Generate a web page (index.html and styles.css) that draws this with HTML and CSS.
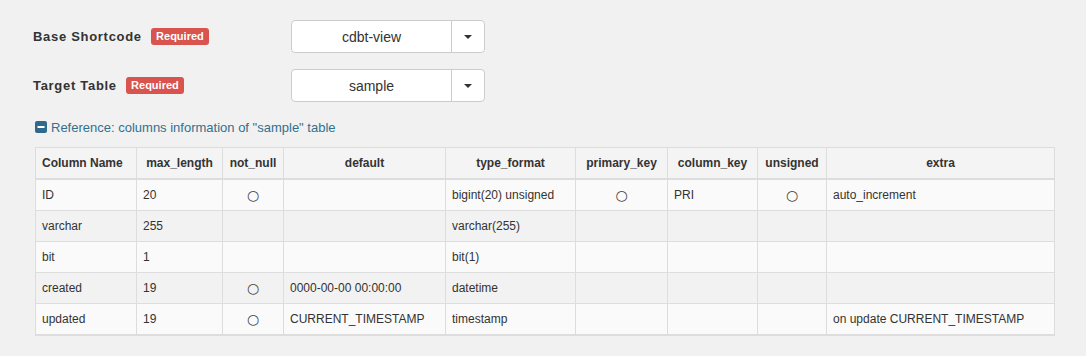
FILE: index.html
```html
<!DOCTYPE html>
<html lang="en">
<head>
    <meta charset="UTF-8">
    <title>cdbt shortcode</title>
    <link rel="stylesheet" href="styles.css">
</head>
<body>
    <div class="panel">
        <div class="field">
            <label class="field-label">Base Shortcode <span class="badge">Required</span></label>
            <div class="select">
                <span class="select-value">cdbt-view</span>
                <span class="select-caret"><i class="caret"></i></span>
            </div>
        </div>
        <div class="field">
            <label class="field-label">Target Table <span class="badge">Required</span></label>
            <div class="select">
                <span class="select-value">sample</span>
                <span class="select-caret"><i class="caret"></i></span>
            </div>
        </div>

        <div class="reference-toggle">
            <svg class="toggle-icon" width="12" height="12" viewBox="0 0 12 12">
                <rect x="0" y="0" width="12" height="12" rx="2" fill="#2f6a8c"/>
                <rect x="2.5" y="5" width="7" height="2" fill="#fff"/>
            </svg>
            Reference: columns information of "sample" table
        </div>

        <table class="columns">
            <colgroup>
                <col style="width:101px">
                <col style="width:86px">
                <col style="width:61px">
                <col style="width:162px">
                <col style="width:130px">
                <col style="width:92px">
                <col style="width:90px">
                <col style="width:69px">
                <col style="width:228px">
            </colgroup>
            <thead>
                <tr>
                    <th class="first">Column Name</th>
                    <th>max_length</th>
                    <th>not_null</th>
                    <th>default</th>
                    <th>type_format</th>
                    <th>primary_key</th>
                    <th>column_key</th>
                    <th>unsigned</th>
                    <th>extra</th>
                </tr>
            </thead>
            <tbody>
                <tr>
                    <td>ID</td>
                    <td>20</td>
                    <td class="mark">○</td>
                    <td></td>
                    <td>bigint(20) unsigned</td>
                    <td class="mark">○</td>
                    <td>PRI</td>
                    <td class="mark">○</td>
                    <td>auto_increment</td>
                </tr>
                <tr>
                    <td>varchar</td>
                    <td>255</td>
                    <td></td>
                    <td></td>
                    <td>varchar(255)</td>
                    <td></td>
                    <td></td>
                    <td></td>
                    <td></td>
                </tr>
                <tr>
                    <td>bit</td>
                    <td>1</td>
                    <td></td>
                    <td></td>
                    <td>bit(1)</td>
                    <td></td>
                    <td></td>
                    <td></td>
                    <td></td>
                </tr>
                <tr>
                    <td>created</td>
                    <td>19</td>
                    <td class="mark">○</td>
                    <td>0000-00-00 00:00:00</td>
                    <td>datetime</td>
                    <td></td>
                    <td></td>
                    <td></td>
                    <td></td>
                </tr>
                <tr>
                    <td>updated</td>
                    <td>19</td>
                    <td class="mark">○</td>
                    <td>CURRENT_TIMESTAMP</td>
                    <td>timestamp</td>
                    <td></td>
                    <td></td>
                    <td></td>
                    <td>on update CURRENT_TIMESTAMP</td>
                </tr>
            </tbody>
        </table>
    </div>
</body>
</html>
```
FILE: styles.css
```css
body {
    margin: 0;
    background-color: #f1f1f1;
    font-family: 'Liberation Sans', Arial, sans-serif;
    color: #333;
}
.panel {
    padding: 20px 0 0 35px;
}
.field {
    display: flex;
    align-items: center;
    height: 33px;
    margin-bottom: 16px;
}
.field-label {
    width: 258px;
    margin-left: -2px;
    font-size: 13px;
    font-weight: bold;
    letter-spacing: 0.7px;
    color: #333;
}
.badge {
    display: inline-block;
    margin-left: 5px;
    padding: 0 5px;
    height: 17px;
    line-height: 17px;
    border-radius: 3px;
    background-color: #d9534f;
    color: #fff;
    font-size: 11px;
    letter-spacing: 0;
    vertical-align: 1px;
}
.select {
    display: flex;
    width: 194px;
    height: 33px;
    box-sizing: border-box;
    border: 1px solid #ccc;
    border-radius: 4px;
    background-color: #fff;
}
.select-value {
    flex: 1;
    text-align: center;
    line-height: 33px;
    font-size: 14px;
    color: #333;
}
.select-caret {
    width: 32px;
    border-left: 1px solid #ccc;
    display: flex;
    align-items: center;
    justify-content: center;
}
.caret {
    width: 0;
    height: 0;
    border-top: 4px solid #333;
    border-left: 4px solid transparent;
    border-right: 4px solid transparent;
}
.reference-toggle {
    display: flex;
    align-items: center;
    gap: 4px;
    margin-top: 3px;
    height: 18px;
    font-size: 13px;
    color: #31708f;
}
.toggle-icon {
    flex: none;
}
.columns {
    margin-top: 11px;
    width: 1019px;
    table-layout: fixed;
    border-collapse: collapse;
    border: 1px solid #ddd;
    border-bottom-width: 2px;
    font-size: 12px;
}
.columns th {
    height: 30px;
    padding: 0 6px;
    background-color: #f4f4f4;
    border: 1px solid #ddd;
    border-bottom: 2px solid #ddd;
    text-align: center;
    font-weight: bold;
    color: #333;
}
.columns th.first {
    text-align: left;
}
.columns td {
    height: 30px;
    padding: 0 6px;
    border: 1px solid #ddd;
    color: #333;
    white-space: nowrap;
}
.columns tbody tr:nth-child(odd) td {
    background-color: #fafafa;
}
.columns tbody tr:nth-child(even) td {
    background-color: #f2f2f2;
}
.columns td.mark {
    text-align: center;
    font-family: 'DejaVu Sans', sans-serif;
    font-size: 14px;
    line-height: 1;
    color: #444;
}
```
